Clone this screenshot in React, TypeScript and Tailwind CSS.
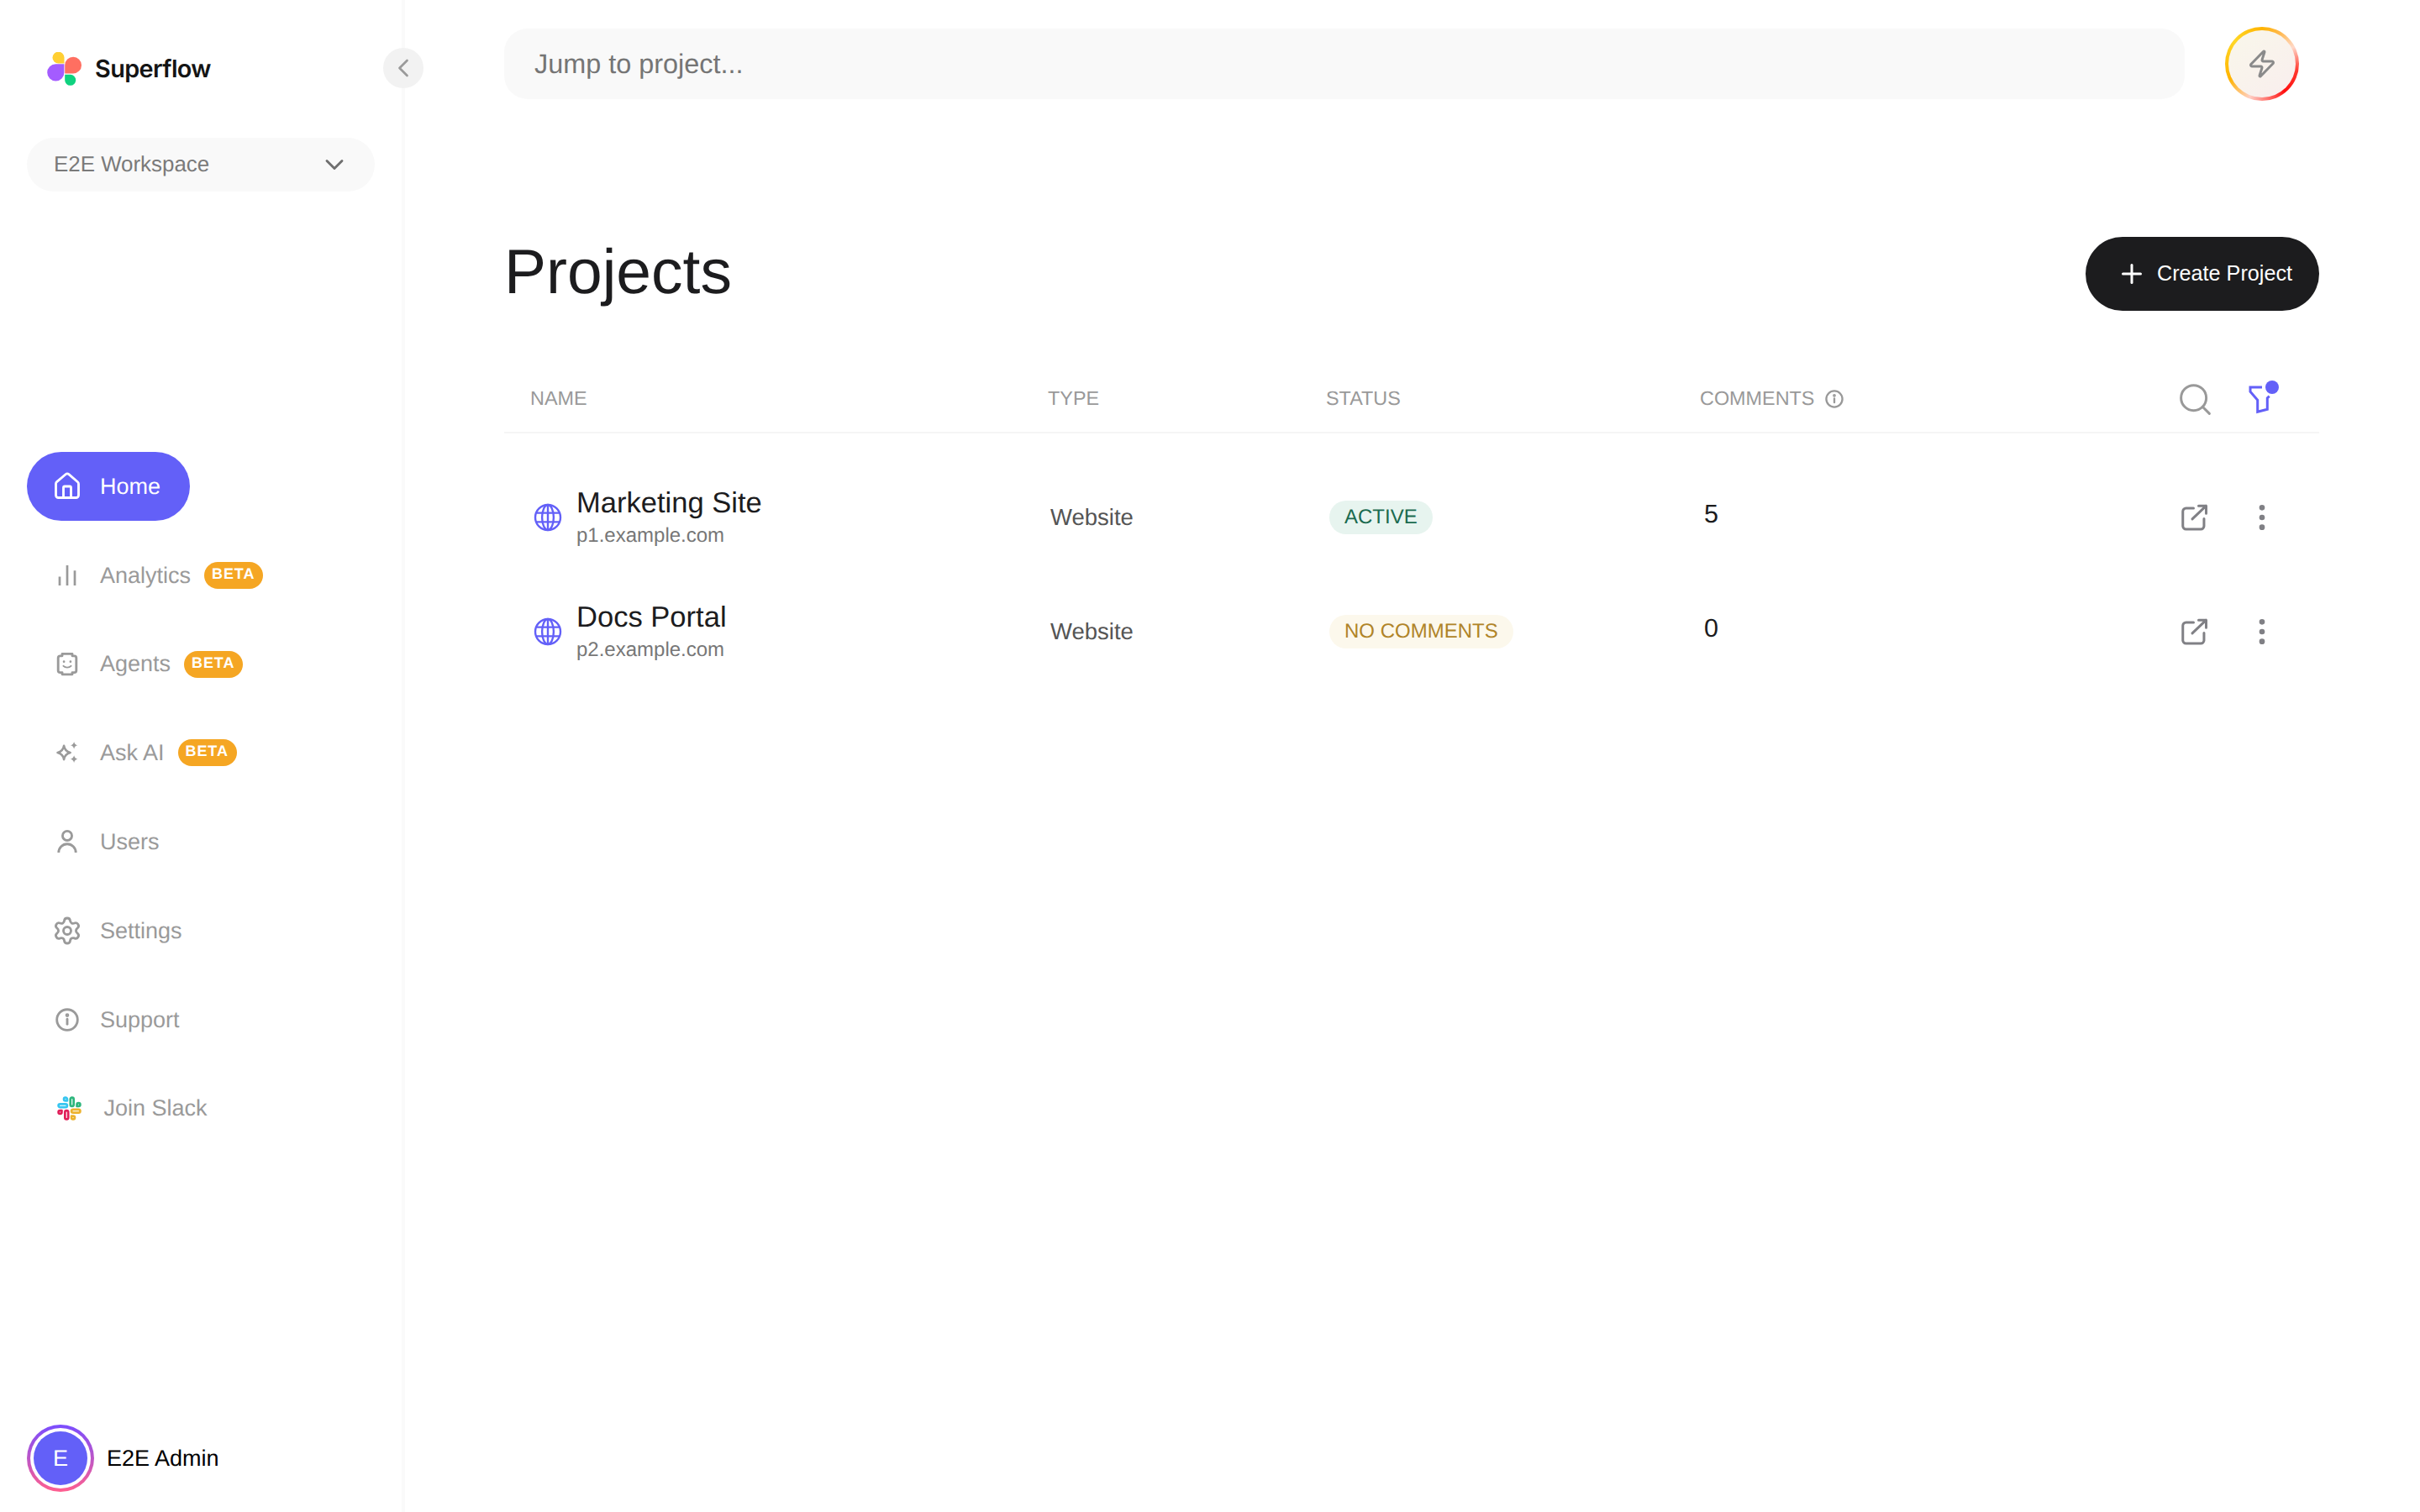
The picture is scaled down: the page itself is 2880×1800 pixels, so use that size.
import React from "react";
import {
  ChevronDown,
  ChevronLeft,
  EllipsisVertical,
  House,
  Plus,
  Search,
  Settings,
  Zap,
} from "lucide-react";

function AnalyticsIcon() {
  return (
    <svg width="36" height="36" viewBox="0 0 24 24" fill="none" stroke="currentColor" strokeWidth="1.8">
      <path d="M6 20v-7M12 20V4M18 20V8.2" />
    </svg>
  );
}

function AgentIcon() {
  return (
    <svg width="36" height="36" viewBox="0 0 24 24" fill="none" stroke="currentColor" strokeWidth="1.9" strokeLinejoin="round">
      <path d="M8 3.6h8v1.6h1.6a1.6 1.6 0 0 1 1.6 1.6v10a1.6 1.6 0 0 1-1.6 1.6H16v1.5H8v-1.5H6.4a1.6 1.6 0 0 1-1.6-1.6v-10a1.6 1.6 0 0 1 1.6-1.6H8z" />
      <circle cx="9.4" cy="9.8" r="0.9" fill="currentColor" stroke="none" />
      <circle cx="14.6" cy="9.8" r="0.9" fill="currentColor" stroke="none" />
      <path d="M9 13.2c1.5 1.6 4.5 1.6 6 0" strokeWidth="1.3" strokeLinecap="round" />
    </svg>
  );
}

function SparkIcon() {
  return (
    <svg width="36" height="36" viewBox="0 0 24 24" fill="none" stroke="currentColor" strokeWidth="1.8" strokeLinejoin="round">
      <path d="M9.4 6.6c.5 3.1 2 4.7 5 5.4-3 .7-4.5 2.3-5 5.4-.5-3.1-2-4.7-5-5.4 3-.7 4.5-2.3 5-5.4z" />
      <path d="M17.4 3.3c.3 1.6 1.1 2.5 2.8 2.9-1.7.4-2.5 1.3-2.8 2.9-.3-1.6-1.1-2.5-2.8-2.9 1.7-.4 2.5-1.3 2.8-2.9z" fill="currentColor" stroke="none" />
      <path d="M17.4 14.2c.3 1.6 1.1 2.5 2.8 2.9-1.7.4-2.5 1.3-2.8 2.9-.3-1.6-1.1-2.5-2.8-2.9 1.7-.4 2.5-1.3 2.8-2.9z" fill="currentColor" stroke="none" />
    </svg>
  );
}

function UserIcon() {
  return (
    <svg width="36" height="36" viewBox="0 0 24 24" fill="none" stroke="currentColor" strokeWidth="1.9">
      <circle cx="12" cy="7.3" r="3.7" />
      <path d="M5.2 20.6a6.8 6.8 0 0 1 13.6 0" />
    </svg>
  );
}

function InfoIcon({ size = 36, width = 1.9 }: { size?: number; width?: number }) {
  return (
    <svg width={size} height={size} viewBox="0 0 24 24" fill="none" stroke="currentColor" strokeWidth={width} strokeLinecap="round">
      <circle cx="12" cy="12" r="8.2" />
      <path d="M12 11.5v4" />
      <circle cx="12" cy="8.4" r="0.6" fill="currentColor" />
    </svg>
  );
}

function SlackIcon() {
  return (
    <svg width="31" height="31" viewBox="0 0 24 24" fill="none" strokeWidth="2.1" strokeLinecap="round" strokeLinejoin="round">
      <g stroke="#2eb67d">
        <rect width="3" height="8" x="13" y="2" rx="1.5" />
        <path d="M19 8.5V10h1.5A1.5 1.5 0 1 0 19 8.5" />
      </g>
      <g stroke="#e01e5a">
        <rect width="3" height="8" x="8" y="14" rx="1.5" />
        <path d="M5 15.5V14H3.5A1.5 1.5 0 1 0 5 15.5" />
      </g>
      <g stroke="#ecb22e">
        <rect width="8" height="3" x="14" y="13" rx="1.5" />
        <path d="M15.5 19H14v1.5a1.5 1.5 0 1 0 1.5-1.5" />
      </g>
      <g stroke="#36c5f0">
        <rect width="8" height="3" x="2" y="8" rx="1.5" />
        <path d="M8.5 5H10V3.5A1.5 1.5 0 1 0 8.5 5" />
      </g>
    </svg>
  );
}

function Logo() {
  return (
    <svg width="41" height="40" viewBox="56 62 41 40">
      <path d="M76.5 75.6H69.5A7 7 0 1 1 76.5 68.6Z" fill="#ffcf33" />
      <path d="M76.4 76.2V86.2A10.1 10.1 0 1 1 66.3 76.2Z" fill="#a45cff" />
      <path d="M77.2 87.5V77.5A9.9 9.9 0 1 1 87.1 87.5Z" fill="#ff6f61" />
      <path d="M77.2 88.8H83.7A6.5 6.5 0 1 1 77.2 95.3Z" fill="#0fd27f" />
    </svg>
  );
}

function GlobeIcon() {
  return (
    <svg width="36" height="36" viewBox="0 0 24 24" fill="none" stroke="#6360f8" strokeWidth="1.6">
      <circle cx="12" cy="12" r="10" />
      <ellipse cx="12" cy="12" rx="4.6" ry="10" />
      <path d="M12 2v20M3 8.4h18M3 15.6h18" />
    </svg>
  );
}

function OpenIcon() {
  return (
    <svg width="36" height="36" viewBox="0 0 24 24" fill="none" stroke="#808085" strokeWidth="2" strokeLinecap="round" strokeLinejoin="round">
      <path d="M11 4.7H5a2.5 2.5 0 0 0-2.5 2.5v11.6a2.5 2.5 0 0 0 2.5 2.5h11.8a2.5 2.5 0 0 0 2.5-2.5V13" />
      <path d="M10 13.3 21 2.8M15 2.8h6v6" />
    </svg>
  );
}

function FilterIcon() {
  return (
    <svg width="44" height="44" viewBox="0 0 44 44" fill="none">
      <path
        d="M22 8H8v5.3l8.7 10v14l11.6-3V21l2.4-2.3"
        stroke="#6360f8"
        strokeWidth="3"
      />
      <circle cx="34" cy="8" r="8" fill="#6360f8" />
    </svg>
  );
}

function Beta() {
  return (
    <span className="rounded-full bg-[#f5a623] pl-[9px] pr-[10px] pt-[3px] pb-[7px] text-[18px] leading-[22px] font-bold tracking-[0.9px] text-white">
      BETA
    </span>
  );
}

const navItems = [
  { label: "Analytics", icon: <AnalyticsIcon />, beta: true },
  { label: "Agents", icon: <AgentIcon />, beta: true },
  { label: "Ask AI", icon: <SparkIcon />, beta: true },
  { label: "Users", icon: <UserIcon />, beta: false },
  { label: "Settings", icon: <Settings size={36} strokeWidth={1.9} />, beta: false },
  { label: "Support", icon: <InfoIcon />, beta: false },
];

const projects = [
  {
    name: "Marketing Site",
    host: "p1.example.com",
    status: "ACTIVE",
    badge: "bg-[#e7f4ef] text-[#1a6b4f]",
    comments: 5,
  },
  {
    name: "Docs Portal",
    host: "p2.example.com",
    status: "NO COMMENTS",
    badge: "bg-[#fcf8ec] text-[#b08428]",
    comments: 0,
  },
];

const gridCols = "grid grid-cols-[616px_331px_445px_566px_171px] pl-[31px]";

export default function App() {
  return (
    <div className="flex h-screen w-full bg-white font-['Liberation_Sans',Arial,sans-serif] [text-rendering:geometricPrecision]">
      <aside className="relative flex w-[482px] shrink-0 flex-col border-r-[4px] border-[#fafafa]">
        <div className="mt-[62px] ml-[56px] flex h-[40px] items-center gap-[16px]">
          <Logo />
          <span className="font-['Inter',sans-serif] text-[28.8px] font-semibold tracking-[-0.6px] text-[#141414]">
            Superflow
          </span>
        </div>
        <button className="absolute top-[57px] left-[456px] flex h-[48px] w-[48px] items-center justify-center rounded-full bg-[#f2f2f2] text-[#9a9a9a]">
          <ChevronLeft size={36} strokeWidth={1.8} />
        </button>

        <div className="mt-[62px] ml-[32px] flex h-[64px] w-[414px] items-center justify-between rounded-full bg-[#f9f9f9] pr-[30px] pl-[32px] text-[25.9px] text-[#7a7a7a]">
          <span>E2E Workspace</span>
          <ChevronDown size={36} strokeWidth={1.9} className="text-[#6f6f6f]" />
        </div>

        <nav className="mt-[310px] ml-[32px] flex flex-col gap-[23.8px] text-[27px] text-[#9a9a9a]">
          <div className="flex h-[82px] w-fit items-center gap-[21px] rounded-full bg-[#6360f8] pr-[35px] pl-[30px] text-white">
            <House size={36} strokeWidth={1.9} />
            <span>Home</span>
          </div>
          {navItems.map((item) => (
            <div key={item.label} className="flex h-[82px] items-center gap-[21px] pl-[30px]">
              {item.icon}
              <div className="flex items-center gap-[16px]">
                <span>{item.label}</span>
                {item.beta && <Beta />}
              </div>
            </div>
          ))}
          <div className="flex h-[82px] items-center gap-[26px] pl-[34.5px]">
            <SlackIcon />
            <span>Join Slack</span>
          </div>
        </nav>

        <div className="mt-auto mb-[24px] ml-[32px] flex items-center gap-[15px]">
          <div className="rounded-full bg-[linear-gradient(180deg,#7a4dff,#ff5f8f)] p-[4px]">
            <div className="rounded-full bg-white p-[4px]">
              <div className="flex h-[64px] w-[64px] items-center justify-center rounded-full bg-[#6360f8] text-[27px] text-white">
                E
              </div>
            </div>
          </div>
          <span className="text-[27px] text-black">E2E Admin</span>
        </div>
      </aside>

      <main className="flex min-w-0 flex-1 flex-col pt-[32px] pr-[120px] pl-[118px]">
        <div className="flex items-center">
          <div className="flex h-[84px] flex-1 items-center rounded-[28px] bg-[#f9f9f9] pl-[36px] text-[32.4px] text-[#757575]">
            Jump to project...
          </div>
          <div className="mr-[24px] ml-[48px] h-[88px] w-[88px] rounded-full bg-[conic-gradient(from_0deg,#ffb300_0deg,#ffb84d_30deg,#ffd9c9_62deg,#ff3a30_100deg,#ff0f0f_140deg,#ffcfc4_200deg,#ffb300_245deg,#ffd726_310deg,#ffb300_360deg)] p-[4px]">
            <div className="flex h-full w-full items-center justify-center rounded-full bg-[linear-gradient(135deg,#f9f7ea,#f9eeee)] text-[#8a8a8a]">
              <Zap size={36} strokeWidth={2} />
            </div>
          </div>
        </div>

        <div className="mt-[162px] flex items-center justify-between">
          <h1 className="-mt-[6px] text-[75px] leading-[88px] font-normal text-[#1c1c1e]">Projects</h1>
          <button className="flex h-[88px] w-[278px] items-center gap-[12px] rounded-full bg-[#1c1c1e] pl-[37px] text-[25.2px] text-white">
            <Plus size={36} strokeWidth={2} />
            Create Project
          </button>
        </div>

        <div className={`${gridCols} mt-[68px] h-[78px] items-center border-b-[2px] border-[#f5f5f5] pb-[2px] text-[23.4px] text-[#999999]`}>
          <span>NAME</span>
          <span>TYPE</span>
          <span>STATUS</span>
          <span className="flex items-center gap-[10px]">
            COMMENTS
            <InfoIcon size={28} width={2} />
          </span>
          <div className="flex items-center gap-[34px]">
            <span className="flex w-[46px] justify-center">
              <Search size={45} strokeWidth={1.6} />
            </span>
            <span className="flex w-[46px] justify-center">
              <FilterIcon />
            </span>
          </div>
        </div>

        <div className="mt-[32px]">
          {projects.map((project) => (
            <div key={project.name} className={`${gridCols} h-[136px] items-center`}>
              <div className="ml-[3px] flex items-center gap-[16px]">
                <GlobeIcon />
                <div className="flex flex-col">
                  <span className="text-[34.56px] leading-[44px] text-[#1c1c1e]">{project.name}</span>
                  <span className="text-[24px] leading-[34px] text-[#777777]">{project.host}</span>
                </div>
              </div>
              <span className="ml-[3px] text-[27.5px] text-[#555555]">{project.name ? "Website" : ""}</span>
              <div className="ml-[4px]">
                <span className={`inline-flex h-[40px] items-center rounded-full px-[18px] text-[24px] ${project.badge}`}>
                  {project.status}
                </span>
              </div>
              <span className="-mt-[6px] ml-[5px] text-[30.6px] text-[#1c1c1e]">{project.comments}</span>
              <div className="flex items-center gap-[34px]">
                <span className="flex w-[46px] justify-center">
                  <OpenIcon />
                </span>
                <span className="flex w-[46px] justify-center text-[#808085]">
                  <EllipsisVertical size={40} strokeWidth={2} />
                </span>
              </div>
            </div>
          ))}
        </div>
      </main>
    </div>
  );
}
